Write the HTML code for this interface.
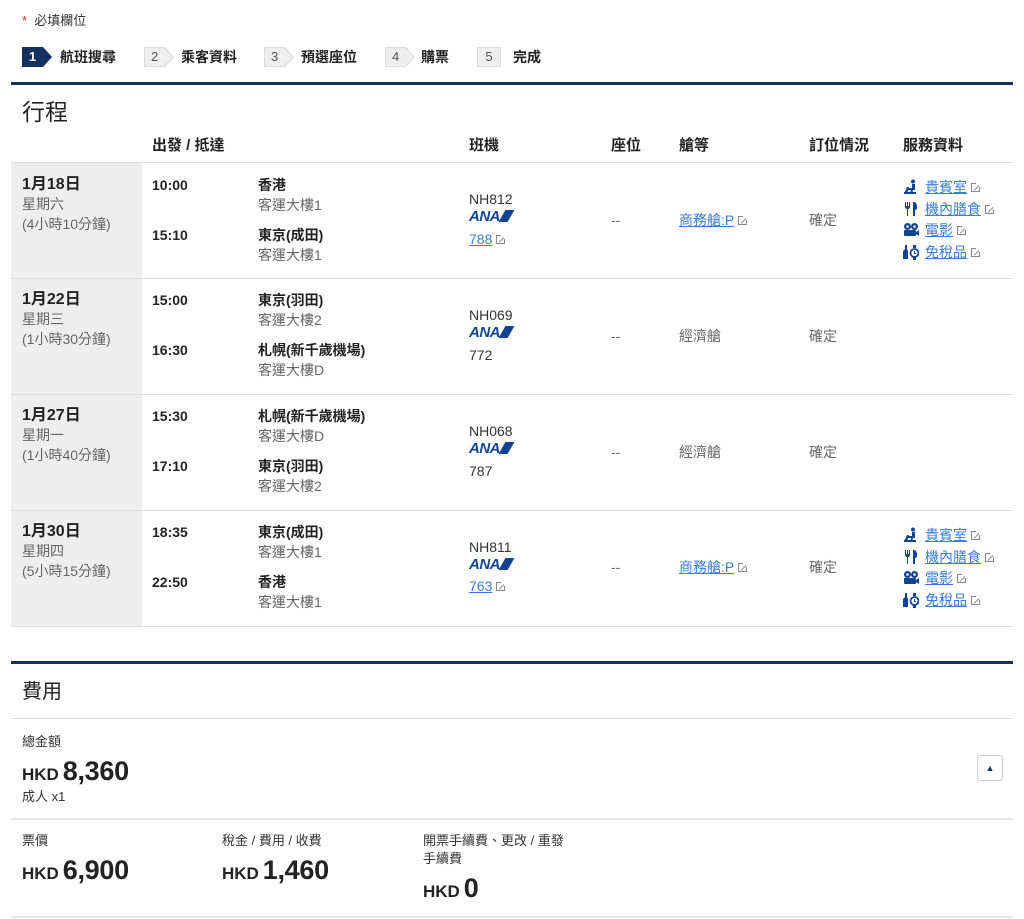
<!DOCTYPE html>
<html><head><meta charset="utf-8"><style>
*{margin:0;padding:0;box-sizing:border-box}
body{width:1024px;height:919px;background:#fff;font-family:"Liberation Sans","Noto Sans CJK TC",sans-serif;color:#333;position:relative;overflow:hidden;font-size:14px}
.a{position:absolute;white-space:nowrap;line-height:18px}
.row{position:absolute;left:11px;width:1002px;height:116px;border-bottom:1px solid #ddd}
.date{position:absolute;left:0;top:0;width:131px;height:115px;background:#eee}
.b{font-weight:bold;color:#222}
.g{color:#666}
.lk{color:#3a7bd5;text-decoration:underline}
.ext{display:inline-block;width:9px;height:9px;border:1px solid #888;margin-left:4px;position:relative;vertical-align:0}
.ext:after{content:"";position:absolute;right:-2px;top:-2px;width:5px;height:5px;background:#fff}
.ext:before{content:"";position:absolute;right:0;top:1px;width:7px;height:1px;background:#888;transform:rotate(-45deg);transform-origin:right;z-index:1}
.ana{font-style:italic;font-weight:900;color:#13448f;font-size:15px;letter-spacing:-0.5px}
.ana i{display:inline-block;width:9px;height:12px;background:#13448f;transform:skewX(-30deg);margin-left:2px;vertical-align:-1px}
.ic{display:inline-block;width:16px;height:16px;vertical-align:-3px;margin-right:6px}
.step{position:absolute;top:47px;height:20px;width:30px;background:#ddd;clip-path:polygon(0 0,21px 0,30px 50%,21px 100%,0 100%)}
.step span{position:absolute;left:1px;top:1px;width:20px;height:18px;background:#eee;clip-path:polygon(0 0,19px 0,28px 50%,19px 100%,0 100%);width:28px;font-size:13px;line-height:18px;color:#555;padding-left:6px}
.hr{position:absolute;left:11px;width:1002px;height:1px;background:#ddd}
.big{font-size:27px;font-weight:bold;color:#222;letter-spacing:-0.3px}
.hkd{font-size:17px;font-weight:bold;color:#222}
</style></head><body>
<div class="a" style="left:22px;top:12px;font-size:13px"><span style="color:#c33">*</span>&nbsp; 必填欄位</div>
<div class="step" style="left:22px;background:#13305f"><span style="background:#13305f;color:#fff;font-weight:bold">1</span></div>
<div class="a b" style="left:60px;top:48px;font-size:14px">航班搜尋</div>
<div class="step" style="left:144px"><span>2</span></div><div class="a b" style="left:181px;top:48px">乘客資料</div>
<div class="step" style="left:264px"><span>3</span></div><div class="a b" style="left:301px;top:48px">預選座位</div>
<div class="step" style="left:385px"><span>4</span></div><div class="a b" style="left:421px;top:48px">購票</div>
<div style="position:absolute;left:477px;top:47px;width:24px;height:20px;background:#eee;border:1px solid #ddd;font-size:13px;line-height:18px;text-align:center;color:#555">5</div><div class="a b" style="left:513px;top:48px">完成</div>
<div style="position:absolute;left:11px;top:82px;width:1002px;height:3px;background:#13305f"></div>
<div class="a" style="left:22px;top:98px;font-size:23px;line-height:28px;color:#222">行程</div>
<div class="a b" style="left:152px;top:137px;font-size:15px">出發 / 抵達</div>
<div class="a b" style="left:469px;top:137px;font-size:15px">班機</div>
<div class="a b" style="left:611px;top:137px;font-size:15px">座位</div>
<div class="a b" style="left:679px;top:137px;font-size:15px">艙等</div>
<div class="a b" style="left:809px;top:137px;font-size:15px">訂位情況</div>
<div class="a b" style="left:903px;top:137px;font-size:15px">服務資料</div>
<div class="hr" style="top:162px"></div>

<svg width="0" height="0" style="position:absolute">
<defs>
<symbol id="lounge" viewBox="0 0 16 16"><circle cx="10" cy="2.5" r="2" fill="#13448f"/><path d="M9 5h3v6h-2l-1 4H7l1-4H4V9h5z" fill="#13448f"/><path d="M1 15l3-7h2l-2 7z" fill="#13448f"/><rect x="1" y="13" width="12" height="2" fill="#13448f"/></symbol>
<symbol id="meal" viewBox="0 0 16 16"><path d="M2 1h1v4h1V1h1v4h1V1h1v5c0 1-1 2-2 2v7H4V8C3 8 2 7 2 6z" fill="#13448f"/><path d="M11 1c2 0 3 2 3 5s-1 3-2 3v6h-2V1z" fill="#13448f"/></symbol>
<symbol id="movie" viewBox="0 0 16 16"><circle cx="4.5" cy="4.5" r="3.5" fill="#13448f"/><circle cx="11.5" cy="4.5" r="3.5" fill="#13448f"/><circle cx="4.5" cy="4.5" r="1.3" fill="#fff"/><circle cx="11.5" cy="4.5" r="1.3" fill="#fff"/><rect x="1" y="8" width="12" height="6" rx="1" fill="#13448f"/><path d="M13 10l3-2v6l-3-2z" fill="#13448f"/></symbol>
<symbol id="duty" viewBox="0 0 16 16"><path d="M2 1h2v4l1 2v8H0V7l2-2z" fill="#13448f"/><rect x="10" y="1" width="3" height="3" fill="#13448f"/><rect x="10" y="13" width="3" height="3" fill="#13448f"/><circle cx="11.5" cy="9" r="4" fill="none" stroke="#13448f" stroke-width="1.8"/><path d="M11.5 7v2.5h1.5" stroke="#13448f" fill="none"/></symbol>
</defs></svg>

<!-- row1 -->
<div class="row" style="top:163px">
<div class="date"></div>
<div class="a b" style="left:11px;top:13px;font-size:16px">1月18日</div>
<div class="a g" style="left:11px;top:32px">星期六</div>
<div class="a g" style="left:11px;top:52px">(4小時10分鐘)</div>
<div class="a b" style="left:141px;top:13px">10:00</div>
<div class="a b" style="left:247px;top:13px">香港</div>
<div class="a g" style="left:247px;top:33px">客運大樓1</div>
<div class="a b" style="left:141px;top:63px">15:10</div>
<div class="a b" style="left:247px;top:63px">東京(成田)</div>
<div class="a g" style="left:247px;top:83px">客運大樓1</div>
<div class="a" style="left:458px;top:27px">NH812</div>
<div class="a ana" style="left:458px;top:45px">ANA<i></i></div>
<div class="a" style="left:458px;top:67px"><span class="lk">788</span><span class="ext"></span></div>
<div class="a g" style="left:600px;top:48px">--</div>
<div class="a" style="left:668px;top:48px"><span class="lk">商務艙:P</span><span class="ext"></span></div>
<div class="a g" style="left:798px;top:48px">確定</div>
<div class="a" style="left:892px;top:15px"><svg class="ic"><use href="#lounge"/></svg><span class="lk">貴賓室</span><span class="ext"></span></div>
<div class="a" style="left:892px;top:37px"><svg class="ic"><use href="#meal"/></svg><span class="lk">機內膳食</span><span class="ext"></span></div>
<div class="a" style="left:892px;top:58px"><svg class="ic"><use href="#movie"/></svg><span class="lk">電影</span><span class="ext"></span></div>
<div class="a" style="left:892px;top:80px"><svg class="ic"><use href="#duty"/></svg><span class="lk">免稅品</span><span class="ext"></span></div>
</div>

<!-- row2 -->
<div class="row" style="top:279px">
<div class="date"></div>
<div class="a b" style="left:11px;top:12px;font-size:16px">1月22日</div>
<div class="a g" style="left:11px;top:31px">星期三</div>
<div class="a g" style="left:11px;top:51px">(1小時30分鐘)</div>
<div class="a b" style="left:141px;top:12px">15:00</div>
<div class="a b" style="left:247px;top:12px">東京(羽田)</div>
<div class="a g" style="left:247px;top:32px">客運大樓2</div>
<div class="a b" style="left:141px;top:62px">16:30</div>
<div class="a b" style="left:247px;top:62px">札幌(新千歲機場)</div>
<div class="a g" style="left:247px;top:82px">客運大樓D</div>
<div class="a" style="left:458px;top:27px">NH069</div>
<div class="a ana" style="left:458px;top:45px">ANA<i></i></div>
<div class="a" style="left:458px;top:67px">772</div>
<div class="a g" style="left:600px;top:48px">--</div>
<div class="a g" style="left:668px;top:48px">經濟艙</div>
<div class="a g" style="left:798px;top:48px">確定</div>
</div>

<!-- row3 -->
<div class="row" style="top:395px">
<div class="date"></div>
<div class="a b" style="left:11px;top:12px;font-size:16px">1月27日</div>
<div class="a g" style="left:11px;top:31px">星期一</div>
<div class="a g" style="left:11px;top:51px">(1小時40分鐘)</div>
<div class="a b" style="left:141px;top:12px">15:30</div>
<div class="a b" style="left:247px;top:12px">札幌(新千歲機場)</div>
<div class="a g" style="left:247px;top:32px">客運大樓D</div>
<div class="a b" style="left:141px;top:62px">17:10</div>
<div class="a b" style="left:247px;top:62px">東京(羽田)</div>
<div class="a g" style="left:247px;top:82px">客運大樓2</div>
<div class="a" style="left:458px;top:27px">NH068</div>
<div class="a ana" style="left:458px;top:45px">ANA<i></i></div>
<div class="a" style="left:458px;top:67px">787</div>
<div class="a g" style="left:600px;top:48px">--</div>
<div class="a g" style="left:668px;top:48px">經濟艙</div>
<div class="a g" style="left:798px;top:48px">確定</div>
</div>

<!-- row4 -->
<div class="row" style="top:511px">
<div class="date"></div>
<div class="a b" style="left:11px;top:12px;font-size:16px">1月30日</div>
<div class="a g" style="left:11px;top:31px">星期四</div>
<div class="a g" style="left:11px;top:51px">(5小時15分鐘)</div>
<div class="a b" style="left:141px;top:12px">18:35</div>
<div class="a b" style="left:247px;top:12px">東京(成田)</div>
<div class="a g" style="left:247px;top:32px">客運大樓1</div>
<div class="a b" style="left:141px;top:62px">22:50</div>
<div class="a b" style="left:247px;top:62px">香港</div>
<div class="a g" style="left:247px;top:82px">客運大樓1</div>
<div class="a" style="left:458px;top:27px">NH811</div>
<div class="a ana" style="left:458px;top:45px">ANA<i></i></div>
<div class="a" style="left:458px;top:66px"><span class="lk">763</span><span class="ext"></span></div>
<div class="a g" style="left:600px;top:47px">--</div>
<div class="a" style="left:668px;top:47px"><span class="lk">商務艙:P</span><span class="ext"></span></div>
<div class="a g" style="left:798px;top:47px">確定</div>
<div class="a" style="left:892px;top:15px"><svg class="ic"><use href="#lounge"/></svg><span class="lk">貴賓室</span><span class="ext"></span></div>
<div class="a" style="left:892px;top:37px"><svg class="ic"><use href="#meal"/></svg><span class="lk">機內膳食</span><span class="ext"></span></div>
<div class="a" style="left:892px;top:58px"><svg class="ic"><use href="#movie"/></svg><span class="lk">電影</span><span class="ext"></span></div>
<div class="a" style="left:892px;top:80px"><svg class="ic"><use href="#duty"/></svg><span class="lk">免稅品</span><span class="ext"></span></div>
</div>

<!-- fees -->
<div style="position:absolute;left:11px;top:661px;width:1002px;height:3px;background:#13305f"></div>
<div class="a" style="left:22px;top:679px;font-size:20px;line-height:26px;color:#222">費用</div>
<div class="hr" style="top:718px"></div>
<div class="a" style="left:22px;top:733px;font-size:13px">總金額</div>
<div class="a" style="left:22px;top:755px;line-height:32px"><span class="hkd">HKD</span> <span class="big">8,360</span></div>
<div class="a" style="left:22px;top:788px;font-size:13px">成人 x1</div>
<div style="position:absolute;left:977px;top:755px;width:26px;height:26px;border:1px solid #ccc;border-radius:3px;text-align:center;font-size:9px;line-height:24px;color:#13305f">▲</div>
<div class="hr" style="top:818px;height:2px;background:#e6e6e6"></div>
<div class="a" style="left:22px;top:832px;font-size:13px">票價</div>
<div class="a" style="left:22px;top:854px;line-height:32px"><span class="hkd">HKD</span> <span class="big">6,900</span></div>
<div class="a" style="left:222px;top:832px;font-size:13px">稅金 / 費用 / 收費</div>
<div class="a" style="left:222px;top:854px;line-height:32px"><span class="hkd">HKD</span> <span class="big">1,460</span></div>
<div class="a" style="left:423px;top:832px;font-size:13px">開票手續費、更改 / 重發</div>
<div class="a" style="left:423px;top:850px;font-size:13px">手續費</div>
<div class="a" style="left:423px;top:872px;line-height:32px"><span class="hkd">HKD</span> <span class="big">0</span></div>
<div class="hr" style="top:916px;height:2px;background:#e6e6e6"></div>
</body></html>
